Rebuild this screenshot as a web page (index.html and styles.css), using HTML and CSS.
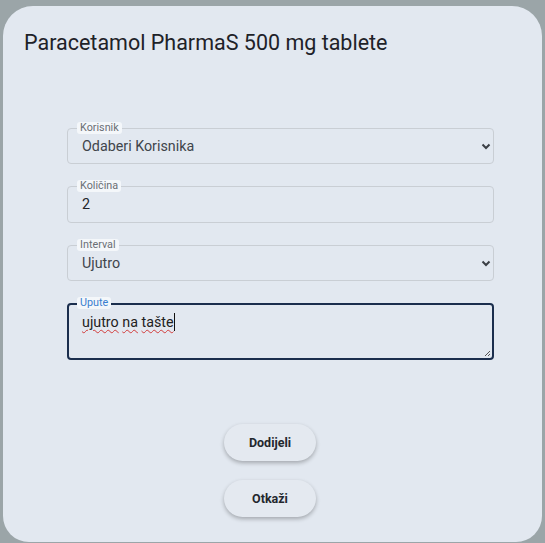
FILE: index.html
```html
<!DOCTYPE html>
<html lang="hr">
<head>
<meta charset="utf-8">
<link rel="stylesheet" href="styles.css">
</head>
<body>
<div class="backdrop">
  <div class="modal">
    <h1 class="title">Paracetamol PharmaS 500 mg tablete</h1>
    <form class="form">
      <div class="field">
        <span class="label">Korisnik</span>
        <div class="control select">Odaberi Korisnika</div>
        <svg class="chev" width="10" height="7" viewBox="0 0 10 7"><path d="M1.5 1.5 L5 5 L8.5 1.5" fill="none" stroke="#3a3f45" stroke-width="2"/></svg>
      </div>
      <div class="field">
        <span class="label">Količina</span>
        <div class="control value">2</div>
      </div>
      <div class="field">
        <span class="label">Interval</span>
        <div class="control select">Ujutro</div>
        <svg class="chev" width="10" height="7" viewBox="0 0 10 7"><path d="M1.5 1.5 L5 5 L8.5 1.5" fill="none" stroke="#3a3f45" stroke-width="2"/></svg>
      </div>
      <div class="field">
        <span class="label active">Upute</span>
        <div class="control area"><span class="spell">ujutro</span> <span class="spell">na</span> <span class="spell">tašte</span><span class="caret"></span></div>
        <svg class="grip" width="8" height="8" viewBox="0 0 8 8"><path d="M7 2 L2 7 M7 5 L5 7" stroke="#555" stroke-width="1"/></svg>
      </div>
    </form>
    <div class="actions">
      <button class="btn" type="button">Dodijeli</button>
      <button class="btn" type="button">Otkaži</button>
    </div>
  </div>
</div>
</body>
</html>
```
FILE: styles.css
```css
* { box-sizing: border-box; }
html, body { margin: 0; padding: 0; }
body {
  background: #9ba5a8;
  font-family: Roboto, "Noto Sans", sans-serif;
  width: 545px;
  height: 543px;
  overflow: hidden;
}
.backdrop {
  padding: 6px 3px 0 3px;
}
.modal {
  background: #e2e8f0;
  border-radius: 30px 30px 26px 26px;
  height: 536px;
  padding: 24px 0 0 0;
}
.title {
  margin: 0 0 0 21px;
  font-size: 21.5px;
  font-weight: 400;
  line-height: 25px;
  color: #1e2228;
}
.form {
  margin: 73px 0 0 64px;
  width: 427px;
  display: flex;
  flex-direction: column;
  gap: 22px;
}
.field {
  position: relative;
}
.label {
  position: absolute;
  left: 10px;
  top: -6px;
  font-size: 10.8px;
  line-height: 12px;
  padding: 0 3px;
  background: #f4f7fa;
  border-radius: 3px;
  color: #6a6f75;
}
.label.active { color: #3b7fd0; }
.control {
  height: 36px;
  border: 1px solid #c9ced4;
  border-radius: 4px;
  padding: 0 0 0 14px;
  font-size: 14.3px;
  line-height: 34px;
  color: #40454b;
}
.control.value { color: #212428; height: 37px; }
.chev {
  position: absolute;
  right: 3px;
  top: 15px;
}
.control.area {
  height: 57px;
  border: 2px solid #1b2e4d;
  line-height: 20px;
  padding: 7px 0 0 13px;
  color: #222;
}
.spell {
  text-decoration: underline wavy #d23b3b;
  text-decoration-thickness: 1px;
  text-underline-offset: 2px;
}
.caret {
  display: inline-block;
  width: 1px;
  height: 18px;
  background: #111;
  vertical-align: -4px;
}
.grip {
  position: absolute;
  right: 3px;
  bottom: 3px;
}
.actions {
  margin-top: 64px;
  display: flex;
  flex-direction: column;
  align-items: center;
  gap: 19px;
  padding-right: 5px;
}
.btn {
  width: 92px;
  height: 37px;
  border: none;
  border-radius: 19px;
  background: #e4e9f0;
  box-shadow: 0 2px 4px rgba(0,0,0,0.28);
  font-family: Roboto, sans-serif;
  font-weight: 700;
  font-size: 12.5px;
  color: #23272d;
  padding: 0;
}
```
